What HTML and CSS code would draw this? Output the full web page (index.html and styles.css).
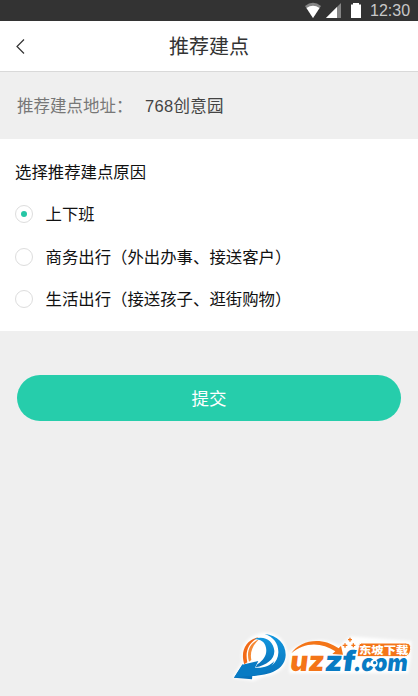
FILE: index.html
```html
<!DOCTYPE html>
<html lang="zh-CN">
<head>
<meta charset="utf-8">
<title>推荐建点</title>
<link rel="stylesheet" href="styles.css">
</head>
<body>
<div class="screen">
  <div class="status">
    <svg class="status-icons" width="60" height="21" viewBox="0 0 60 21">
      <path d="M0 6Q8-.5 16 6L8 18Z" fill="#858585"/>
      <path d="M1.500 8Q8 3.500 14.500 8L8 18Z" fill="#fff"/>
      <path d="M21 18L36 3V18Z" fill="#858585"/>
      <path d="M21 18L32 7V18Z" fill="#fff"/>
      <path d="M46 4.500h2V3h6v1.500h2V18H46Z" fill="#fff"/>
    </svg>
    <span class="clock">12:30</span>
  </div>
  <header class="header">
    <svg class="back" width="10" height="16" viewBox="0 0 10 16"><path d="M9 1.500L2 8.500L9 15.500" fill="none" stroke="#333" stroke-width="1.200"/></svg>
    <h1 class="title">推荐建点</h1>
  </header>
  <div class="address">
    <span class="address-label">推荐建点地址：</span>
    <span class="address-value">768创意园</span>
  </div>
  <main class="reasons">
    <h2 class="reasons-title">选择推荐建点原因</h2>
    <div class="option"><i class="radio radio-on"></i><span>上下班</span></div>
    <div class="option"><i class="radio"></i><span>商务出行（外出办事、接送客户）</span></div>
    <div class="option"><i class="radio"></i><span>生活出行（接送孩子、逛街购物）</span></div>
  </main>
  <button class="submit">提交</button>
  <svg class="watermark" width="190" height="71" viewBox="0 0 570 213">
    <defs>
      <linearGradient id="blue" x1="0" y1="0" x2="0" y2="1"><stop offset="0" stop-color="#1297df"/><stop offset="1" stop-color="#0870b8"/></linearGradient>
      <filter id="glow" x="-10%" y="-10%" width="120%" height="120%"><feGaussianBlur stdDeviation="5"/></filter>
    </defs>
    <path d="M14 158L42 112Q30 45 98 24Q165 15 178 85Q178 145 110 154L75 168ZM184 80Q260 22 335 62L368 34L550 48L548 98L540 145H184Z" fill="#fff" filter="url(#glow)"/>
    <path d="M49 118C35 75 57 43 92 37C64 52 50 75 58 112Z" fill="#f26a16"/>
    <path d="M63 110C53 76 69 53 93 43C74 61 65 82 70 105Z" fill="#f58a36"/>
    <path d="M76 43C108 29 136 47 139 77C140 103 116 120 83 127L88 118C108 105 118 88 114 68C110 49 96 42 76 43Z" fill="url(#blue)"/>
    <path d="M110 27C149 30 174 58 173 91C171 128 138 150 73 153L72 163L18 158L44 117L47 128C108 147 150 121 151 83C152 56 137 36 110 27Z" fill="url(#blue)"/>
    <path d="M43 119L91 108L81 128C108 130 126 122 139 108C125 143 96 152 58 153L18 158Z" fill="#087bc4"/>
    <path d="M190 85C218 42 285 35 332 70L339 62L345 89L313 87L322 79C281 51 229 50 190 85Z" fill="#f47518"/>
    <g class="logo-word" transform="translate(0 138) skewX(-7)">
      <text x="184" y="0" textLength="103" lengthAdjust="spacingAndGlyphs" fill="#f47518">uz</text>
      <text x="287" y="0" textLength="92" lengthAdjust="spacingAndGlyphs" fill="#087bc4">zf</text>
      <text class="logo-com" x="374" y="0" textLength="162" lengthAdjust="spacingAndGlyphs" fill="#087bc4">.com</text>
    </g>
    <circle cx="438" cy="115" r="11" fill="#fff"/><circle cx="440" cy="113" r="5" fill="#087bc4"/>
    <path d="M366 38v12M360 44h12M351 55v13M344 61h14M376 55v12M370 61h12" stroke="#f47518" stroke-width="4"/>
    <path d="M401 54H533Q550 54 548 73Q546 94 529 95H387L391 66Q392 54 401 54Z" fill="#f47518" stroke="#fff" stroke-width="3"/>
    <text class="badge-text" x="393" y="88" textLength="148" lengthAdjust="spacingAndGlyphs">东坡下载</text>
  </svg>
</div>
</body>
</html>
```
FILE: styles.css
```css
* { box-sizing: border-box; }
body {
  margin: 0;
  font-family: "Noto Sans CJK SC", sans-serif;
}
.screen {
  position: relative;
  display: flex;
  flex-direction: column;
  height: 696px;
  overflow: hidden;
  background: #efefef;
}
.status {
  display: flex;
  align-items: center;
  justify-content: flex-end;
  gap: 5px;
  height: 21px;
  padding-right: 7px;
  background: #333;
}
.clock {
  width: 41px;
  color: #c8c8c8;
  font: 16px/21px "Liberation Sans", sans-serif;
  white-space: nowrap;
}
.header {
  display: grid;
  grid-template-columns: 10px 1fr 10px;
  align-items: center;
  height: 51px;
  padding: 0 15px;
  background: #fff;
  border-bottom: 1px solid #d9d9d9;
}
.title {
  margin: 0;
  font-size: 20px;
  font-weight: 400;
  line-height: 30px;
  text-align: center;
  color: #333;
}
.address {
  display: flex;
  align-items: center;
  height: 67px;
  padding: 0 17px 2px;
  font-size: 16.500px;
}
.address-label { width: 128px; color: #777; white-space: nowrap; }
.address-value {
  color: #444;
  font-family: "Liberation Sans", "Noto Sans CJK SC", sans-serif;
  letter-spacing: .3px;
}
.reasons {
  height: 192px;
  padding: 16px 15px 0;
  background: #fff;
  color: #111;
  font-size: 16.400px;
}
.reasons-title {
  margin: 0 0 6px;
  font-size: inherit;
  font-weight: 400;
  line-height: 32px;
}
.option {
  display: flex;
  align-items: center;
  gap: 13px;
  height: 42.500px;
  white-space: nowrap;
}
.option > span { margin: -1px 0 1px -.5px; }
.radio {
  display: grid;
  place-items: center;
  width: 18px;
  height: 18px;
  border: 1px solid #ddd;
  border-radius: 50%;
}
.radio-on::after {
  content: "";
  width: 6px;
  height: 6px;
  border-radius: 50%;
  background: #26c6a5;
}
.submit {
  height: 46px;
  margin: 44px 17px 0;
  padding: 0;
  border: 0;
  border-radius: 23px;
  background: #26cdab;
  color: #fff;
  font: 17.500px/46px "Noto Sans CJK SC", sans-serif;
}
.watermark {
  position: absolute;
  left: 228px;
  top: 625px;
}
.logo-word {
  font: 900 84px Inter, sans-serif;
}
.logo-com { font-size: 70px; }
.badge-text {
  font: 900 32px "Noto Sans CJK SC", sans-serif;
  fill: #fff;
}
```
